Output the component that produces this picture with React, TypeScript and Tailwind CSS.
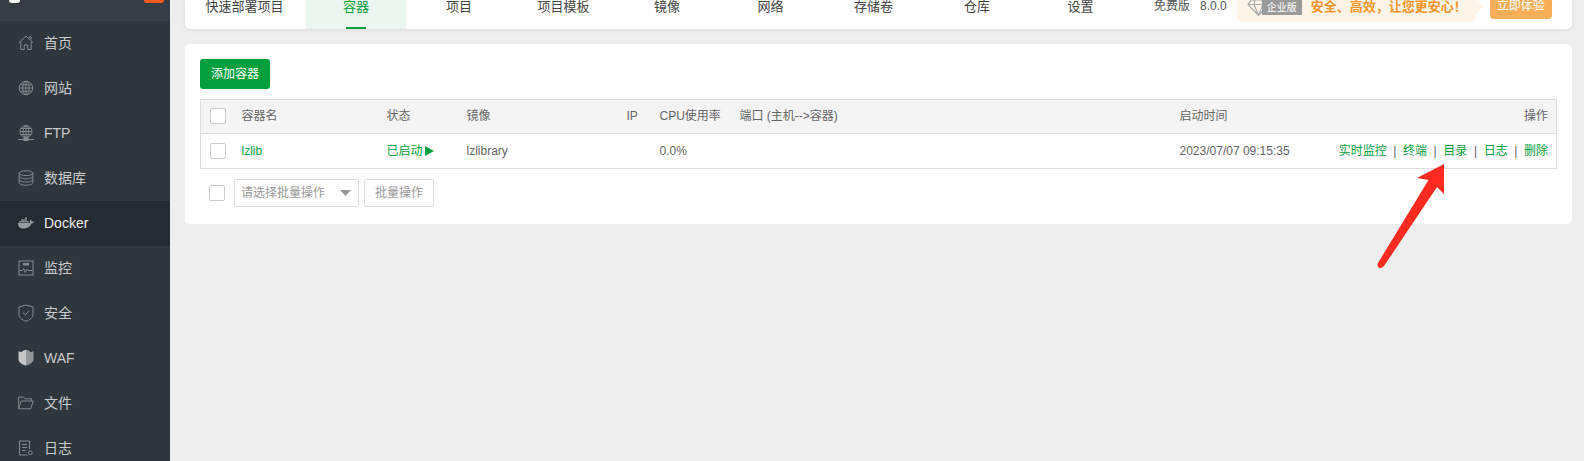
import React from 'react';
import { FaDocker } from 'react-icons/fa';

const fontStack = 'font-["Liberation_Sans","Noto_Sans_CJK_SC",sans-serif]';

const tabs = [
  { label: '快速部署项目', width: 'w-[121px] pr-[2px]' },
  { label: '容器', width: 'w-[100px]', active: true },
  { label: '项目', width: 'w-[106px]' },
  { label: '项目模板', width: 'w-[103px]' },
  { label: '镜像', width: 'w-[104px]' },
  { label: '网络', width: 'w-[103px]' },
  { label: '存储卷', width: 'w-[103px]' },
  { label: '仓库', width: 'w-[104px]' },
  { label: '设置', width: 'w-[103px]' },
];

const stroke = {
  fill: 'none',
  stroke: '#85898d',
  strokeWidth: 1,
};

const HomeIcon = () => (
  <svg width="16" height="16" viewBox="0 0 16 16" {...stroke}>
    <path d="M0.8 7.8 8 1l7.2 6.8M2.8 6.5V14.5H6.2V10H9.8V14.5H13.2V6.5M11.5 3V1.8H13V4.5" />
  </svg>
);

const GlobeIcon = () => (
  <svg width="16" height="16" viewBox="0 0 16 16" {...stroke}>
    <circle cx="8" cy="8" r="6.8" />
    <ellipse cx="8" cy="8" rx="3.2" ry="6.8" />
    <path d="M8 1.2v13.6M1.2 8h13.6M2.2 4.8h11.6M2.2 11.2h11.6" />
  </svg>
);

const FtpIcon = () => (
  <svg width="16" height="16" viewBox="0 0 16 16" {...stroke}>
    <circle cx="8" cy="6.500" r="6" />
    <ellipse cx="8" cy="6.500" rx="2.800" ry="6" />
    <path d="M8 .5v12M2 6.500h12M2.800 3.500h10.400M2.800 9.500h10.400M0 14.500h16" />
    <rect x="6" y="12.500" width="4" height="3" fill="#85898d" />
  </svg>
);

const DatabaseIcon = () => (
  <svg width="16" height="16" viewBox="0 0 16 16" {...stroke}>
    <ellipse cx="8" cy="3.200" rx="6.800" ry="2.400" />
    <path d="M1.200 3.200v9.600c0 1.300 3 2.400 6.800 2.400s6.800-1.100 6.800-2.400V3.200M1.200 6.400c0 1.300 3 2.400 6.800 2.400s6.800-1.100 6.800-2.400M1.200 9.600c0 1.300 3 2.400 6.800 2.400s6.800-1.100 6.800-2.400" />
  </svg>
);

const MonitorIcon = () => (
  <svg width="16" height="16" viewBox="0 0 16 16" {...stroke}>
    <rect x="1" y="1" width="14" height="14" />
    <path d="M1.500 10.500h3l1.200-2 1.600 4 1.600-3.500 1 1.500h4.600" />
    <rect x="5" y="3" width="6" height="2.500" fill="#85898d" stroke="none" />
  </svg>
);

const ShieldIcon = () => (
  <svg width="16" height="18" viewBox="0 0 16 18" {...stroke}>
    <path d="M8 1 15 3v8c0 2.600-3.500 5-7 6.200C4.500 16 1 13.600 1 11V3Z" />
    <path d="m4.800 8.500 2.400 2.300 4-4" />
  </svg>
);

const WafIcon = () => (
  <svg width="16" height="17" viewBox="0 0 16 17">
    <path d="M0.500 2 3 3.200 5.500 1.500 8 .8V16.500C4.500 15.800 .5 13.500 .5 10.500Z" fill="#c4c6c8" />
    <path d="M15.500 2 13 3.200 10.500 1.500 8 .8V16.500C11.500 15.800 15.500 13.500 15.500 10.500Z" fill="#94979a" />
  </svg>
);

const FolderIcon = () => (
  <svg width="16" height="14" viewBox="0 0 16 14" {...stroke}>
    <path d="M.7 12.800V1h5l1.500 1.800h6.300V5M.7 12.800h12L15.300 5H3.200Z" />
  </svg>
);

const LogIcon = () => (
  <svg width="16" height="16" viewBox="0 0 16 16" {...stroke}>
    <path d="M11.500 9V1H1.500v14h8M4 4.500h5M4 7.500h5M4 10.500h3.500" />
    <circle cx="12.300" cy="12.700" r="1.900" />
  </svg>
);

const menu = [
  { label: '首页', icon: <HomeIcon /> },
  { label: '网站', icon: <GlobeIcon /> },
  { label: 'FTP', icon: <FtpIcon /> },
  { label: '数据库', icon: <DatabaseIcon /> },
  { label: 'Docker', icon: <FaDocker size={16} color="#9a9da0" />, active: true },
  { label: '监控', icon: <MonitorIcon /> },
  { label: '安全', icon: <ShieldIcon /> },
  { label: 'WAF', icon: <WafIcon /> },
  { label: '文件', icon: <FolderIcon /> },
  { label: '日志', icon: <LogIcon /> },
];

const actions = ['实时监控', '终端', '目录', '日志', '删除'];

const Checkbox = () => <span className="block h-4 w-4 rounded-[2px] border border-[#ccc] bg-white" />;

const Sidebar = () => (
  <aside className="flex h-full w-[170px] shrink-0 flex-col overflow-hidden bg-[#2f363c]">
    <div className="flex h-[21px] shrink-0 justify-between bg-[#363d44] pl-[9px] pr-[6px]">
      <span className="h-[3px] w-[11px] rounded-b-full bg-white" />
      <span className="h-[3px] w-[20px] rounded-b-[4px] bg-[#ff5a1f]" />
    </div>
    {menu.map((item) => (
      <div
        key={item.label}
        className={`flex h-[45px] shrink-0 items-center gap-[10px] pb-[2px] pl-[18px] text-sm ${
          item.active ? 'bg-[#262a31] text-[#eeeeee]' : 'text-[#c9cbcd]'
        }`}
      >
        <span className="flex w-4 justify-center">{item.icon}</span>
        <span>{item.label}</span>
      </div>
    ))}
  </aside>
);

const TopBar = () => (
  <div className="flex h-[29px] rounded-b-[5px] bg-white text-[#444] shadow-[0_1px_4px_rgba(0,0,0,0.08)]">
    {tabs.map((tab) => (
      <div key={tab.label} className={`${tab.width} relative shrink-0 text-center text-[13px] leading-[13px]`}>
        {tab.active ? (
          <div className="h-[29px] bg-[#ebf6f0] text-[#0a9f3e]">
            {tab.label}
            <span className="absolute bottom-0 left-[40px] h-[2px] w-5 bg-[#0a9f3e]" />
          </div>
        ) : (
          tab.label
        )}
      </div>
    ))}
    <span className="ml-[22px] text-xs leading-[12px] text-[#555]">免费版</span>
    <span className="ml-[10px] text-xs leading-[12px] text-[#555]">8.0.0</span>
    <div className="ml-[10px] flex h-[22px] w-[239px] rounded-b-md bg-[#fff4e8] pl-[10px]">
      <svg width="23" height="16" viewBox="0 0 23 16" className="shrink-0">
        <path d="M1 4.500 4.500 0H18.500L22 4.500 11.500 15.500ZM1 4.500H22M7 4.500 11.500 15.500 16 4.500M8 0 7 4.500M15 0 16 4.500" fill="none" stroke="#a9a9a9" strokeWidth="1.200" />
      </svg>
      <span className="-ml-2 h-[15px] w-10 bg-[#9a9a9a] text-center text-[10px] leading-[16px] text-white">企业版</span>
      <span className="ml-[9px] whitespace-nowrap text-[13px] font-bold leading-[13px] text-[#f8942a]">安全、高效，让您更安心！</span>
    </div>
    <span className="-mt-[2px] h-0 w-0 border-y-[8px] border-l-[7px] border-y-transparent border-l-[#fff4e8]" />
    <div className="ml-[7px] h-[19px] w-[62px] rounded-b-[4px] bg-[#f8ad58] text-center text-xs leading-[13px] text-white">立即体验</div>
  </div>
);

const ContainerTable = () => (
  <table className="w-full table-fixed border-collapse border border-[#ddd] text-xs text-[#666]">
    <colgroup>
      <col className="w-[31px]" />
      <col className="w-[145px]" />
      <col className="w-[80px]" />
      <col className="w-[160px]" />
      <col className="w-[33px]" />
      <col className="w-[80px]" />
      <col className="w-[440px]" />
      <col />
    </colgroup>
    <thead>
      <tr className="h-[34px] border-b border-[#ddd] bg-[#f4f4f4] text-left">
        <th className="pb-[2px] pl-[9px] font-normal"><Checkbox /></th>
        <th className="pb-[2px] pl-[10px] font-normal">容器名</th>
        <th className="pb-[2px] pl-[10px] font-normal">状态</th>
        <th className="pb-[2px] pl-[10px] font-normal">镜像</th>
        <th className="pb-[2px] pl-[10px] font-normal">IP</th>
        <th className="pb-[2px] pl-[10px] font-normal">CPU使用率</th>
        <th className="overflow-visible whitespace-nowrap pb-[2px] pl-[10px] font-normal">端口 (主机--&gt;容器)</th>
        <th className="pb-[2px] pl-[10px] pr-2 font-normal">
          <div className="flex justify-between">
            <span>启动时间</span>
            <span>操作</span>
          </div>
        </th>
      </tr>
    </thead>
    <tbody>
      <tr className="h-[35px]">
        <td className="pl-[9px]"><Checkbox /></td>
        <td className="pl-[10px] text-[#0a9f3e]">lzlib</td>
        <td className="pl-[10px]">
          <span className="flex items-center text-[#0a9f3e]">
            已启动
            <svg width="9" height="10" viewBox="0 0 9 10" className="ml-[2px]">
              <path d="M0 0 9 5 0 10Z" fill="#0a9f3e" />
            </svg>
          </span>
        </td>
        <td className="pl-[10px]">lzlibrary</td>
        <td />
        <td className="pl-[10px]">0.0%</td>
        <td />
        <td className="pl-[10px] pr-2">
          <div className="flex items-center justify-between">
            <span>2023/07/07 09:15:35</span>
            <span className="flex items-center text-[#0a9f3e]">
              {actions.map((action, i) => (
                <React.Fragment key={action}>
                  {i > 0 && <span className="mx-[6.6px] text-[#666]">|</span>}
                  <span>{action}</span>
                </React.Fragment>
              ))}
            </span>
          </div>
        </td>
      </tr>
    </tbody>
  </table>
);

const BatchBar = () => (
  <div className="mt-[10px] flex items-center text-xs">
    <span className="ml-[9px]"><Checkbox /></span>
    <div className="ml-[9px] flex h-7 w-[125px] items-center justify-between rounded-[2px] border border-[#ddd] bg-white pl-[6px] pr-[7px] text-[#999]">
      <span>请选择批量操作</span>
      <svg width="11" height="6" viewBox="0 0 11 6">
        <path d="M0 0H11L5.500 6Z" fill="#999" />
      </svg>
    </div>
    <div className="ml-[5px] flex h-7 w-[70px] items-center justify-center rounded-[2px] border border-[#ddd] bg-white text-[#999]">批量操作</div>
  </div>
);

const App = () => (
  <div className={`${fontStack} relative flex h-[461px] w-[1584px] overflow-hidden bg-[#eeeeee]`}>
    <Sidebar />
    <main className="min-w-0 flex-1 pl-[15px] pr-3">
      <TopBar />
      <section className="mt-[15px] h-[180px] rounded-[5px] bg-white p-[15px]">
        <button type="button" className="h-[30px] w-[70px] rounded-[3px] bg-[#039f3d] text-xs text-white">添加容器</button>
        <div className="mt-[10px]">
          <ContainerTable />
        </div>
        <BatchBar />
      </section>
    </main>
    {/* red annotation arrow pasted over the screenshot */}
    <svg width="1584" height="461" viewBox="0 0 1584 461" className="pointer-events-none absolute left-0 top-0">
      <path
        d="M1444 164 1417 178 1428.500 180 1378 263Q1376.500 266.500 1379.500 268 1382 268.500 1384 266L1437 187 1444 194Z"
        fill="#ff2a20"
      />
    </svg>
  </div>
);

export default App;
